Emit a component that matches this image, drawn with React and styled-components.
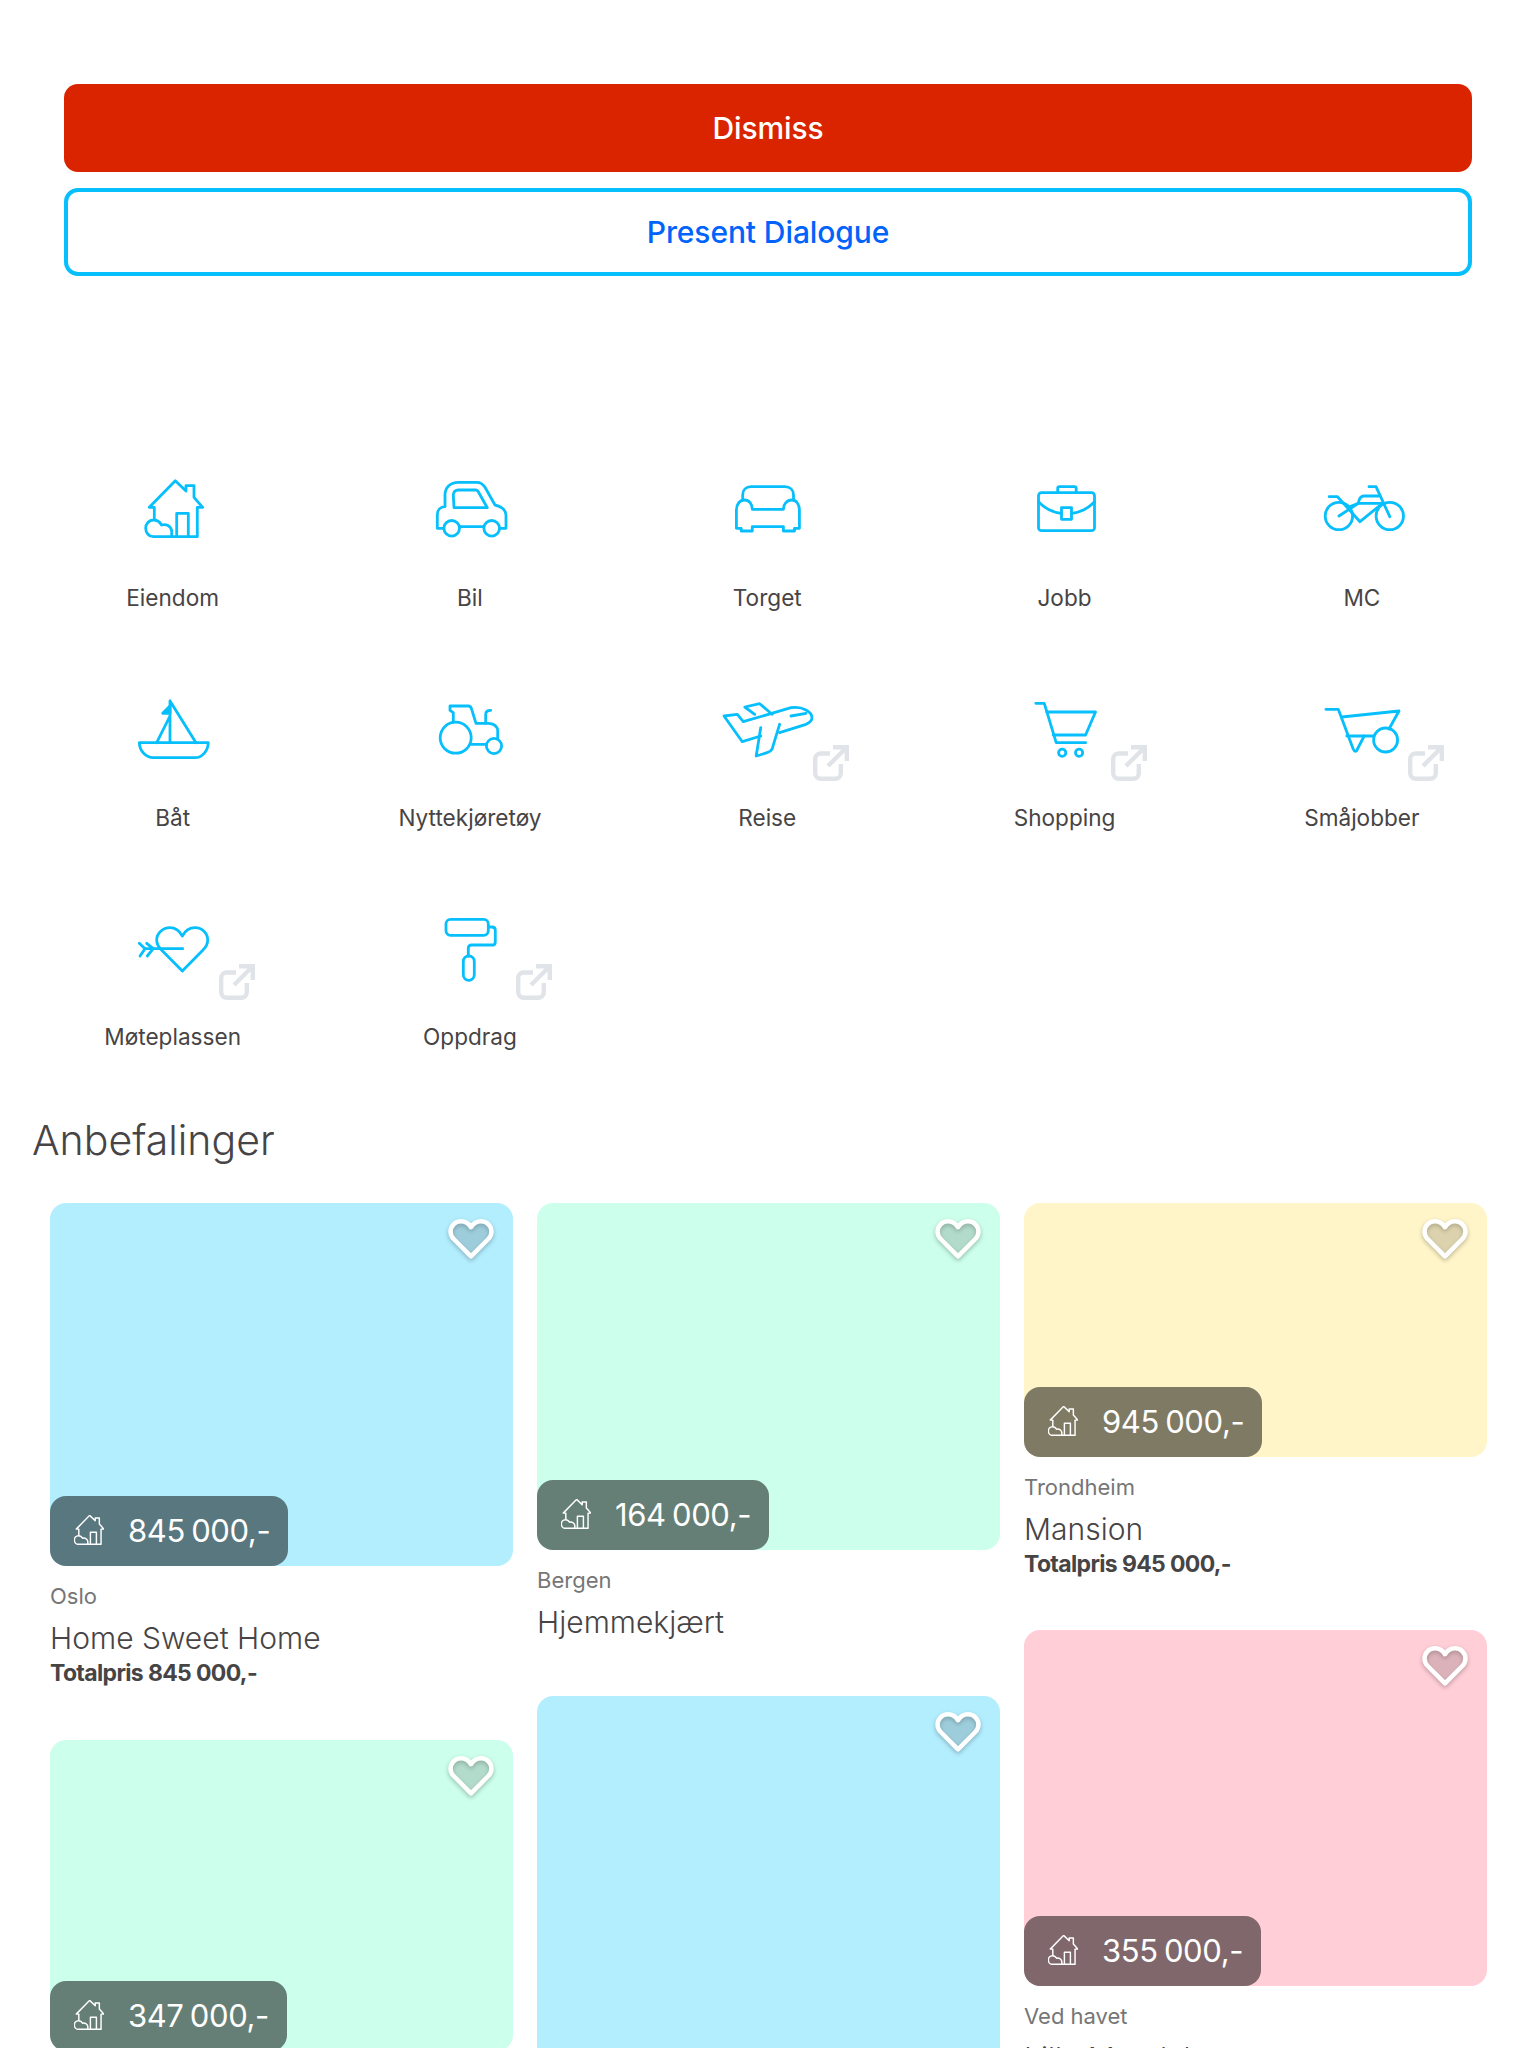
import React from "react";
import styled, { createGlobalStyle } from "styled-components";

const GlobalStyle = createGlobalStyle`
  html, body {
    margin: 0;
    padding: 0;
    background: #fff;
    overflow: hidden;
    height: 2048px;
  }
  body {
    font-family: Inter, "Liberation Sans", sans-serif;
    color: #474445;
  }
`;

const Page = styled.div`
  width: 1536px;
  height: 2048px;
  overflow: hidden;
`;

const Actions = styled.div`
  display: flex;
  flex-direction: column;
  gap: 16px;
  padding: 84px 64px 0;
`;

const Button = styled.button`
  height: 88px;
  border-radius: 14px;
  border: ${({ $primary }) => ($primary ? "none" : "4px solid #06bffc")};
  background: ${({ $primary }) => ($primary ? "#da2400" : "#fff")};
  color: ${({ $primary }) => ($primary ? "#fff" : "#0063fb")};
  font-family: inherit;
  font-size: 30px;
  font-weight: 500;
  letter-spacing: -0.1px;
`;

const Market = styled.div`
  display: grid;
  grid-template-columns: repeat(5, 297.3px);
  grid-auto-rows: 219.5px;
  padding: 185px 24px 0;
`;

const Tile = styled.div`
  display: flex;
  flex-direction: column;
  align-items: center;
`;

const IconBox = styled.div`
  position: relative;
  width: 96px;
  height: 96px;
`;

const TileIcon = styled.svg`
  display: block;
  width: 96px;
  height: 96px;
  fill: none;
  stroke: #06bffc;
  stroke-width: 2.8;
  stroke-linejoin: round;
  stroke-linecap: round;
`;

const External = styled.svg`
  position: absolute;
  left: 94px;
  top: 64px;
  width: 36px;
  height: 36px;
  fill: none;
  stroke: #e0e4e8;
  stroke-width: 4.4;
`;

const TileLabel = styled.div`
  margin-top: 25px;
  font-size: 22.6px;
  line-height: 32px;
  text-align: center;
`;

const Heading = styled.h2`
  margin: 0;
  padding: 0 0 0 32px;
  font-size: 41px;
  font-weight: 300;
  line-height: 41px;
`;

const Columns = styled.div`
  display: grid;
  grid-template-columns: repeat(3, 463px);
  gap: 24px;
  padding: 42.5px 0 0 50px;
  align-items: start;
`;

const Column = styled.div`
  display: flex;
  flex-direction: column;
`;

const Card = styled.article`
  margin-bottom: ${({ $gap }) => $gap}px;
`;

const Picture = styled.div`
  position: relative;
  height: ${({ $height }) => $height}px;
  border-radius: 16px;
  background: ${({ $color }) => $color};
`;

const Heart = styled.svg`
  position: absolute;
  top: 16px;
  right: 20px;
  width: 44px;
  height: 40px;
  overflow: visible;
  fill: rgba(71, 68, 69, 0.15);
  stroke: #fff;
  stroke-width: 5;
  stroke-linejoin: round;
  filter: drop-shadow(0 2px 2px rgba(0, 0, 0, 0.25));
`;

const PriceTag = styled.div`
  position: absolute;
  left: 0;
  bottom: 0;
  display: flex;
  align-items: center;
  gap: 24px;
  height: 70px;
  padding: 0 18px 2px 24px;
  box-sizing: border-box;
  border-radius: 16px;
  background: rgba(0, 0, 0, 0.5);
  color: #fff;
  font-size: 31px;
  letter-spacing: -0.4px;
  word-spacing: -2px;
`;

const TagIcon = styled.svg`
  display: block;
  width: 30px;
  height: 30px;
  fill: none;
  stroke: #fff;
  stroke-width: 2.8;
  stroke-linejoin: round;
`;

const Place = styled.div`
  margin-top: 15px;
  font-size: 22px;
  line-height: 30px;
  color: #767676;
`;

const Title = styled.div`
  margin-top: 7px;
  font-size: 30px;
  font-weight: 300;
  line-height: 40px;
`;

const Total = styled.div`
  font-size: 23px;
  font-weight: 700;
  line-height: 30px;
  letter-spacing: -0.65px;
`;

const HousePaths = () => (
  <>
    <path d="M29.3 59V46.3H24.3L50.3 19.7L61 30V24.7H69V36.3L77.7 46.3H72.3V75.7H28.3C24 75.7 20.7 72 20.7 67.3C20.7 63 24 59 28.3 59C32 59 35 61 36.5 64C41 62.5 46 65 46.7 70V75.7" />
    <path d="M51.7 75.7V52.3H63.3V75.7" />
  </>
);

const icons = {
  house: <HousePaths />,
  car: (
    <>
      <path d="M21.5 67.3H15.3V54C15.3 49 18.5 45.7 23 45.7V34C23 26.5 28.5 21.3 36.3 21.3H54.7C58.5 21.3 61 23 63 26.3L73 44C79 45 84 49 84 54V67.3H78" />
      <path d="M38 65.7H61.3" />
      <circle cx="29.7" cy="67.3" r="7.8" />
      <circle cx="69.7" cy="67.3" r="7.8" />
      <path d="M32 46.7L31.3 34C31.3 31 33.5 29 36.3 29H53.7C55 29 55.8 29.5 56.3 30.7L65.3 46.7Z" />
    </>
  ),
  sofa: (
    <>
      <path d="M23.7 39V34C23.7 29 27 25.7 32 25.7H65.8C71 25.7 74.5 29 74.5 34V39" />
      <path d="M22.2 67.3H17.4V49C17.4 43 21 39 25.6 39C30 39 33.3 43 33.3 48.3H64.4C64.4 43 68 39 73 39C77 39 80.4 43 80.4 49V67.3H75.5V70H64.4V65.7H33.3V70H22.2Z" />
    </>
  ),
  briefcase: (
    <>
      <rect x="21.5" y="31.7" width="56" height="38" rx="3" />
      <path d="M40.7 31.7V27.5C40.7 26.4 41.5 25.7 42.5 25.7H57.5C58.5 25.7 59.2 26.4 59.2 27.5V31.7" />
      <path d="M21.5 40.7C27.5 47 35.5 51.5 44.5 52.3M54.5 52.3C63.5 51.5 71.5 47 77.5 40.7" />
      <rect x="44.5" y="46.7" width="10" height="11.6" />
    </>
  ),
  bike: (
    <>
      <circle cx="24.9" cy="55" r="13.7" />
      <circle cx="75.8" cy="55" r="13.7" />
      <path d="M15.2 35.7H23.5L46 60.7L68.5 42.3" />
      <path d="M55 25.7H62L75.8 55.7" />
      <path d="M25 55L44.3 42.3C45 37.5 46.5 35 50 35H64.6" />
      <path d="M35.5 45.7L44.3 42.3H68.5" />
    </>
  ),
  boat: (
    <>
      <path d="M14.3 61.7H83.3C83 70 77 76.7 70 76.7H28.3C21 76.7 14.6 70 14.3 61.7Z" />
      <path d="M45 20V61.7M45 20L71 61.7M45 35L31.7 61.7" />
      <path d="M37.7 32.3L45 25V32.3Z" fill="#06bffc" />
    </>
  ),
  tractor: (
    <>
      <circle cx="33.7" cy="56.7" r="15.5" />
      <circle cx="72" cy="65" r="7.6" />
      <path d="M31.3 41.2V31.7L28 29.3V25H46.3C48 25 49.2 26.5 49.7 28.3L54 42.3H66.3C71.5 42.3 75.7 45.5 75.7 50V57.3" />
      <path d="M48.7 63.3H64.5" />
      <path d="M63.7 42.3V33.3C63.7 31 65.5 29.3 68.7 29.3" />
    </>
  ),
  plane: (
    <>
      <path d="M60.6 51.7L87 43.3C91 41.5 93 39.5 93 36.7C93 31 84 25 72 26.7L24.3 40.7L18.3 33.3L5 35L23.3 60.7L41.7 55" />
      <path d="M41.7 46.7L37.2 75L48.2 71.7C50.5 71 52 70 53 68.3L60.6 43.3" />
      <path d="M35.7 33.3L25.8 26L40.7 22.7L53 33.3" />
      <path d="M72 35L87 32.3" />
    </>
  ),
  cart: (
    <>
      <path d="M18.8 22.3H27.3L39.2 61.7H68.6" />
      <path d="M29.8 31H78.5L68.6 54H36.2" />
      <circle cx="45.2" cy="71.7" r="3.6" />
      <circle cx="62.1" cy="71.7" r="3.6" />
    </>
  ),
  barrow: (
    <>
      <path d="M11.9 28.3H24.3L39.2 68C40.5 71 42.5 71 43.2 68.5L50.2 55" />
      <path d="M32.8 55H60" />
      <circle cx="71.6" cy="59" r="12" />
      <path d="M27.8 36L85 30L75 48" />
    </>
  ),
  heart: (
    <>
      <path d="M57.3 71L36.5 50C33 46.5 31.7 43 31.7 40C31.7 33 38 27.7 45 27.7C50 27.7 54.5 31 57.3 36C60 31 64.5 27.7 70 27.7C77 27.7 82.7 33 82.7 40C82.7 43 81.5 46.5 78 50Z" />
      <path d="M20 48.7H57.7" />
      <path d="M14.3 43.3L20 48.7L15 56M21.7 43.3L28.3 48.7L22.3 56" />
    </>
  ),
  roller: (
    <>
      <rect x="24" y="19.3" width="42.3" height="16" rx="4.5" />
      <path d="M66.3 27H69.7C72 27 73.3 28.3 73.3 30V41.7C73.3 43.7 72.2 45 70.7 45H49.7C47.7 45 46.3 46.4 46.3 48.3V56" />
      <rect x="41.3" y="56" width="11" height="24.3" rx="5.5" />
    </>
  ),
};

const tiles = [
  { label: "Eiendom", icon: "house" },
  { label: "Bil", icon: "car" },
  { label: "Torget", icon: "sofa" },
  { label: "Jobb", icon: "briefcase" },
  { label: "MC", icon: "bike" },
  { label: "Båt", icon: "boat" },
  { label: "Nyttekjøretøy", icon: "tractor" },
  { label: "Reise", icon: "plane", external: true },
  { label: "Shopping", icon: "cart", external: true },
  { label: "Småjobber", icon: "barrow", external: true },
  { label: "Møteplassen", icon: "heart", external: true },
  { label: "Oppdrag", icon: "roller", external: true },
];

const BLUE = "#b3eeff";
const GREEN = "#ccffec";
const YELLOW = "#fff5c8";
const PINK = "#ffced7";

const columns = [
  [
    { height: 363, color: BLUE, price: "845 000,-", place: "Oslo", title: "Home Sweet Home", total: "Totalpris 845 000,-", gap: 52 },
    { height: 311, color: GREEN, price: "347 000,-", gap: 0 },
  ],
  [
    { height: 347, color: GREEN, price: "164 000,-", place: "Bergen", title: "Hjemmekjært", gap: 54 },
    { height: 500, color: BLUE, gap: 0 },
  ],
  [
    { height: 254, color: YELLOW, price: "945 000,-", place: "Trondheim", title: "Mansion", total: "Totalpris 945 000,-", gap: 51 },
    { height: 356, color: PINK, price: "355 000,-", place: "Ved havet", title: "Lille Mandal", gap: 0 },
  ],
];

function ListingCard({ item }) {
  return (
    <Card $gap={item.gap}>
      <Picture $height={item.height} $color={item.color}>
        <Heart viewBox="0 0 48 44">
          <path d="M24 41L5 22C2.5 19.5 1.5 16.5 1.5 14C1.5 7.5 6.5 2.5 13 2.5C17.5 2.5 21.5 5 24 9C26.5 5 30.5 2.5 35 2.5C41.5 2.5 46.5 7.5 46.5 14C46.5 16.5 45.5 19.5 43 22Z" />
        </Heart>
        {item.price && (
          <PriceTag>
            <TagIcon viewBox="20 19 58 58">
              <HousePaths />
            </TagIcon>
            {item.price}
          </PriceTag>
        )}
      </Picture>
      {item.place && <Place>{item.place}</Place>}
      {item.title && <Title>{item.title}</Title>}
      {item.total && <Total>{item.total}</Total>}
    </Card>
  );
}

export default function App() {
  return (
    <Page>
      <GlobalStyle />
      <Actions>
        <Button $primary>Dismiss</Button>
        <Button>Present Dialogue</Button>
      </Actions>
      <Market>
        {tiles.map((tile) => (
          <Tile key={tile.label}>
            <IconBox>
              <TileIcon viewBox="0 0 96 96">{icons[tile.icon]}</TileIcon>
              {tile.external && (
                <External viewBox="0 0 36 36">
                  <path d="M17 8.5H8C4.5 8.5 2.2 10.8 2.2 14V28C2.2 31.5 4.5 33.8 8 33.8H22C25.5 33.8 27.8 31.5 27.8 28V19" />
                  <path d="M15 21L32 4M20 2.2H33.8V16" />
                </External>
              )}
            </IconBox>
            <TileLabel>{tile.label}</TileLabel>
          </Tile>
        ))}
      </Market>
      <Heading>Anbefalinger</Heading>
      <Columns>
        {columns.map((cards, i) => (
          <Column key={i}>
            {cards.map((item, j) => (
              <ListingCard key={j} item={item} />
            ))}
          </Column>
        ))}
      </Columns>
    </Page>
  );
}
